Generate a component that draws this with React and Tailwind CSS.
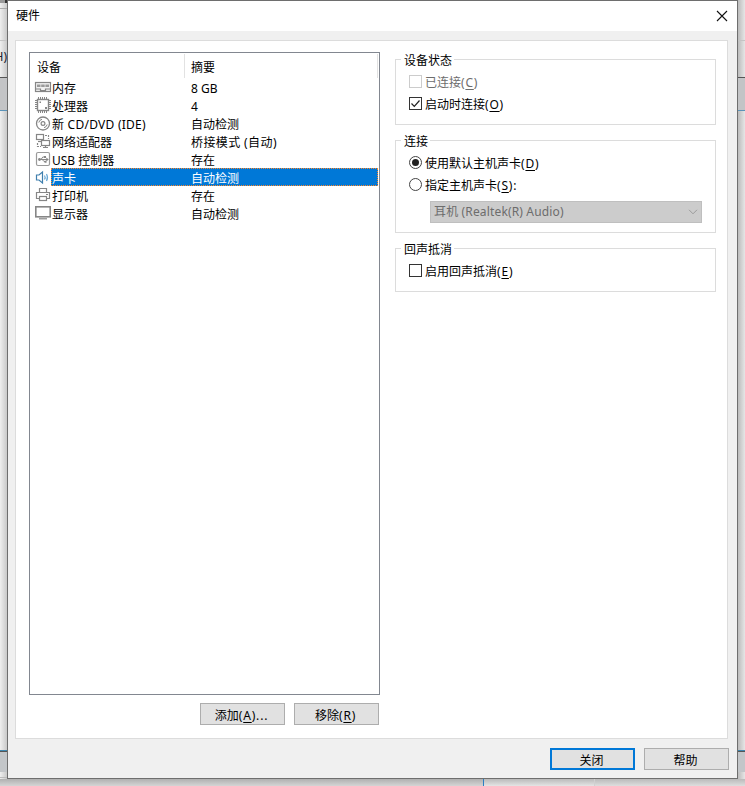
import React from "react";

const G = "#868686";

function Svg({ children }) {
  return (
    <svg width="18" height="18" viewBox="0 0 18 18" fill="none" stroke={G} strokeWidth="1.2" className="shrink-0">
      {children}
    </svg>
  );
}

const icons = {
  memory: (
    <Svg>
      <rect x="1.5" y="4.5" width="15" height="9" fill="#f1f1f1" />
      <path d="M3 6.5h3.500v2.500H3zM7.200 6.500h3.500v2.500H7.200zM11.400 6.500h3.600v2.500h-3.600z" fill="#9a9a9a" stroke="none" />
      <path d="M2 11h4.500v1.500h5V11H16" />
    </Svg>
  ),
  cpu: (
    <Svg>
      <rect x="3.5" y="3.5" width="11" height="11" strokeWidth="1.4" />
      <path
        d="M4.5 1v2M6.5 1v2M8.5 1v2M10.5 1v2M12.5 1v2M4.5 15v2M6.5 15v2M8.5 15v2M10.5 15v2M12.5 15v2M1 4.5h2M1 6.5h2M1 8.5h2M1 10.5h2M1 12.5h2M15 4.5h2M15 6.5h2M15 8.5h2M15 10.5h2M15 12.5h2"
        strokeWidth="1"
      />
      <path d="M5.500 5.500h1.500v1.500H5.500zM11 11h2v2h-2z" fill={G} stroke="none" />
    </Svg>
  ),
  disc: (
    <Svg>
      <circle cx="9" cy="9.5" r="6.5" strokeWidth="1.3" />
      <circle cx="9" cy="9.5" r="1.9" />
      <path d="M4.800 8.500A4.300 4.300 0 0 1 8 5.300M13.200 10.500A4.300 4.300 0 0 1 10 13.700" strokeWidth="1" />
    </Svg>
  ),
  net: (
    <Svg>
      <rect x="2.5" y="2.5" width="7" height="5" />
      <path d="M4 9.500h3" />
      <path d="M11 3.500h3.500V7" strokeDasharray="2 1" />
      <path d="M3.500 11v3.500H7" strokeDasharray="2 1" />
      <rect x="7.500" y="8.500" width="8" height="5" fill="#fff" />
      <path d="M9 15.500h5M11.500 13.500v2" />
    </Svg>
  ),
  usb: (
    <Svg>
      <rect x="2.5" y="2.5" width="13" height="13" rx="1.500" stroke="#9a9a9a" />
      <path d="M5 9.500h8M7 9.500l1.800-2.500h2M8.200 9.500l1.800 2h1.500" strokeWidth="1" />
      <circle cx="5.500" cy="9.500" r="1.400" fill={G} stroke="none" />
      <path d="M12.300 7.500l2.500 2-2.500 2zM10 6h2v2h-2zM10.500 10.800h2v2h-2z" fill={G} stroke="none" />
    </Svg>
  ),
  sound: (
    <Svg>
      <path d="M2.5 7h2.500L8.500 4v11L5 12H2.500z" stroke="#3f7fad" />
      <path d="M10.500 7.500q1.300 2 0 4M12.500 6q2 3.500 0 7" stroke="#6aa9d6" />
    </Svg>
  ),
  printer: (
    <Svg>
      <path d="M5.500 6.500v-4h7v4M5.500 12.500h-3v-6h13v6h-3" />
      <rect x="5.500" y="10.500" width="7" height="4" />
      <path d="M12 8.500h2" />
    </Svg>
  ),
  display: (
    <Svg>
      <rect x="1.800" y="2.800" width="14.400" height="10" strokeWidth="1.600" />
      <path d="M5 14.800h8" />
    </Svg>
  ),
};

const rows = [
  ["memory", "内存", "8 GB"],
  ["cpu", "处理器", "4"],
  ["disc", "新 CD/DVD (IDE)", "自动检测"],
  ["net", "网络适配器", "桥接模式 (自动)"],
  ["usb", "USB 控制器", "存在"],
  ["sound", "声卡", "自动检测"],
  ["printer", "打印机", "存在"],
  ["display", "显示器", "自动检测"],
];

function DeviceRow({ icon, name, summary, selected }) {
  return (
    <div className="flex h-[18px] pl-1 pr-px">
      {icons[icon]}
      <div
        className={
          selected
            ? "-ml-px flex flex-1 border border-dotted border-[#ff8728] bg-[#0078d7] pt-px leading-[18px] text-white"
            : "flex flex-1 pt-0.5 leading-[18px]"
        }
      >
        <span className={name.includes("CD") ? "w-[139px] tracking-[0.25px]" : "w-[139px]"}>{name}</span>
        <span className={summary.includes("(") ? "whitespace-pre tracking-[0.4px]" : ""}>{summary}</span>
      </div>
    </div>
  );
}

function Group({ title, className, children }) {
  return (
    <section className={"w-[321px] border border-[#dcdcdc] " + className}>
      <div className="-mt-[9px] ml-[5px] h-[18px] w-fit bg-white pr-[2px] pl-[3px] leading-5">{title}</div>
      {children}
    </section>
  );
}

function Label({ text, k, tail, low }) {
  return (
    <span className={low ? "pt-0.5 whitespace-pre" : "whitespace-pre"}>
      {text}
      <span className="tracking-[0.8px]">
        (<span className="underline underline-offset-2">{k}</span>){tail}
      </span>
    </span>
  );
}

function Check({ checked, disabled }) {
  return (
    <svg width="13" height="13" viewBox="0 0 13 13" fill="none" className="-mt-px shrink-0">
      <rect x=".5" y=".5" width="12" height="12" fill="#fff" stroke={disabled ? "#cccccc" : "#333333"} />
      {checked && <path d="M2.500 6.500l2.800 2.800L10.500 3.500" stroke="#222" strokeWidth="1.200" />}
    </svg>
  );
}

function Radio({ checked }) {
  return (
    <svg width="13" height="13" viewBox="0 0 13 13" className="-mt-px shrink-0">
      <circle cx="6.500" cy="6.500" r="6" fill="#fff" stroke="#444" />
      {checked && <circle cx="6.500" cy="6.500" r="3.500" fill="#222" />}
    </svg>
  );
}

function Option({ control, children, className = "" }) {
  return (
    <div className={"ml-[13px] flex h-[22px] items-center gap-[3px] " + className}>
      {control}
      {children}
    </div>
  );
}

function Button({ primary, children }) {
  return (
    <button
      className={
        "flex h-[22px] w-[85px] items-center justify-center bg-[#e1e1e1] pt-[3px] pr-0.5 " +
        (primary ? "border-2 border-[#0078d7]" : "border border-[#adadad]")
      }
    >
      {children}
    </button>
  );
}

function SideStrip({ left }) {
  return (
    <div
      className={
        "flex w-[7px] flex-col overflow-hidden bg-linear-to-r " +
        (left ? "from-[#efefef] to-[#c9c9c9]" : "from-[#bcbcbc] to-[#e6e6e6]")
      }
    >
      <div className={left ? "h-[3px] border-r-2 border-[#333] bg-[#999]" : "h-[3px]"} />
      <div className="h-[5px]" />
      <div className={left ? "h-[32px] border-t border-[#aaa]" : "h-[32px]"} />
      <div className="flex h-[36px] justify-end border-t border-[#c4c4c4] pt-[7px] leading-[18px]">
        {left && <span className="whitespace-nowrap text-[#202030]">H)</span>}
      </div>
      <div className="mt-px h-[34px] border-t border-b border-t-[#555] border-b-[#5b93b8] bg-[#c3c4c6]" />
      <div className="flex-1" />
      <div className="h-px bg-[#3f87b0]" />
      <div className="h-[21px] border-t border-[#555] bg-[#c3c6c9]" />
      <div className={left ? "h-[6px] border-b border-[#bbb]" : "h-[6px]"} />
      <div className="h-px" />
    </div>
  );
}

export default function App() {
  return (
    <div className="flex h-[786px] w-[745px] flex-col overflow-hidden bg-[#e3e3e3] font-['Noto_Sans','Noto_Sans_CJK_SC',sans-serif] text-[12px] leading-[18px] text-black">
      <div className="flex h-[779px]">
        <SideStrip left />
        <main className="flex w-[731px] flex-col border border-[#6e6e6e] bg-[#f0f0f0]">
          <header className="flex h-[30px] items-center justify-between bg-white pr-[9px] pl-2">
            <h1>硬件</h1>
            <svg width="12" height="12" viewBox="0 0 12 12" stroke="#111" strokeWidth="1.100" className="-mt-px">
              <path d="M1 1l10 10M11 1L1 11" />
            </svg>
          </header>
          <div className="mt-[9px] ml-[7px] flex h-[699px] w-[713px] border border-[#dcdcdc] bg-white pt-[11px] pl-[13px]">
            <div className="flex w-[351px] flex-col">
              <div className="h-[643px] border border-[#828790]">
                <div className="flex h-[25px] pt-px">
                  <div className="h-6 w-[155px] border-r border-[#e2e2e2] pt-[5px] pl-[7px]">设备</div>
                  <div className="h-6 w-[193px] border-r border-[#e2e2e2] pt-[5px] pl-[6px]">摘要</div>
                </div>
                {rows.map(([icon, name, summary]) => (
                  <DeviceRow key={icon} icon={icon} name={name} summary={summary} selected={icon === "sound"} />
                ))}
              </div>
              <div className="mt-2 flex justify-end gap-[9px] pr-px">
                <Button><Label text="添加" k="A" tail="..." /></Button>
                <Button><Label text="移除" k="R" /></Button>
              </div>
            </div>
            <div className="ml-[15px] flex flex-col pt-[7px]">
              <Group title="设备状态" className="h-[66px]">
                <Option control={<Check disabled />} className="mt-0.5 text-[#6d6d6d]"><Label text="已连接" k="C" low /></Option>
                <Option control={<Check checked />}><Label text="启动时连接" k="O" low /></Option>
              </Group>
              <Group title="连接" className="mt-[15px] h-[93px]">
                <Option control={<Radio checked />} className="mt-0.5"><Label text="使用默认主机声卡" k="D" low /></Option>
                <Option control={<Radio />}><Label text="指定主机声卡" k="S" tail=":" low /></Option>
                <div className="mt-[5px] ml-[34px] flex h-[22px] w-[272px] items-center justify-between border border-[#bfbfbf] bg-[#cccccc] px-[3px] text-[#6d6d6d]">
                  <span className="tracking-[0.15px]">耳机 (Realtek(R) Audio)</span>
                  <svg width="10" height="6" viewBox="0 0 10 6" fill="none" stroke="#9b9b9b">
                    <path d="M1 .8l4 4 4-4" />
                  </svg>
                </div>
              </Group>
              <Group title="回声抵消" className="mt-[15px] h-[44px]">
                <Option control={<Check />} className="mt-0.5"><Label text="启用回声抵消" k="E" low /></Option>
              </Group>
            </div>
          </div>
          <footer className="mt-[9px] flex justify-end gap-[9px] pr-2">
            <Button primary>关闭</Button>
            <Button>帮助</Button>
          </footer>
        </main>
        <SideStrip />
      </div>
      <div className="flex h-[7px]">
        <div className="w-[484px] border-r border-[#2b7fc4] bg-linear-to-b from-[#b0b0b0] to-[#d5d5d5]" />
        <div className="w-[111px] border-r border-[#d0d0d0] bg-linear-to-b from-[#bababa] to-[#e5e5e5]" />
        <div className="flex-1 bg-linear-to-b from-[#bababa] to-[#dedede]" />
      </div>
    </div>
  );
}
